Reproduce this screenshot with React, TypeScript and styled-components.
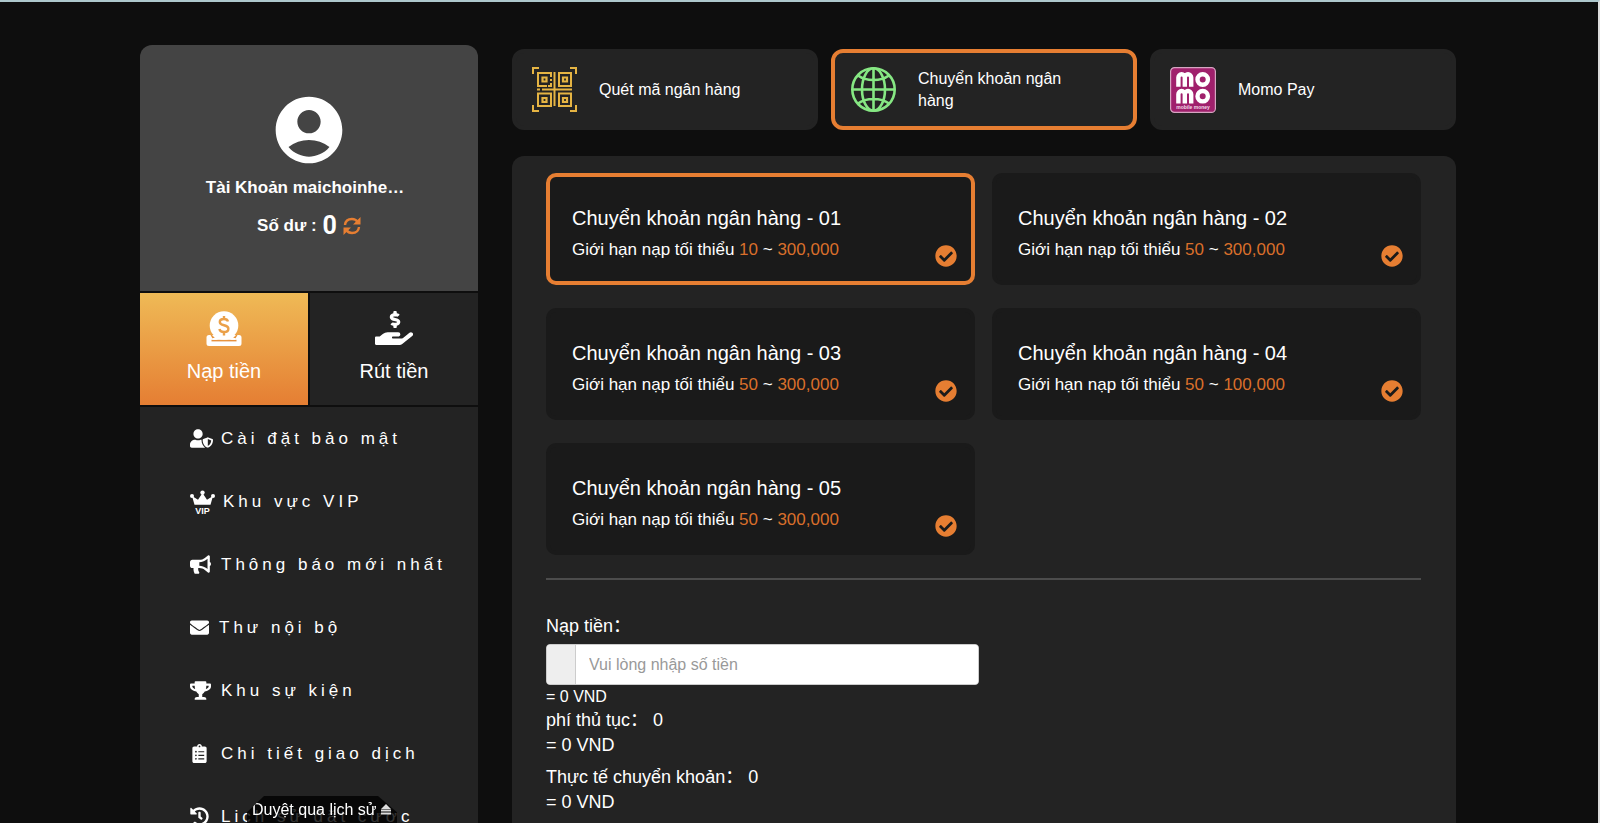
import React, { useState } from "react";
import styled, { createGlobalStyle } from "styled-components";
import {
  FaUserShield,
  FaBullhorn,
  FaEnvelope,
  FaTrophy,
  FaClipboardList,
  FaHistory,
  FaCheckCircle,
  FaHandHoldingUsd,
} from "react-icons/fa";
import { MdAccountCircle } from "react-icons/md";

const GlobalStyle = createGlobalStyle`
  * { box-sizing: border-box; }
  html { background: #0e0e0e; }
  body {
    margin: 0;
    color: #fff;
    font-family: "Liberation Sans", Arial, "Noto Sans CJK SC", sans-serif;
    font-size: 16px;
  }
  button, input { font: inherit; }
`;

const accent = "#e67e32";
const panel = "#232323";

const Page = styled.div`
  height: 100vh;
  overflow: hidden;
  border-top: 2px solid #adc7cc;
  border-right: 2px solid #dcdcdc;
  padding: 43px 142px 0 140px;
  display: flex;
  gap: 34px;
  align-items: flex-start;
`;

const Sidebar = styled.aside`
  flex: none;
  width: 338px;
  display: flex;
  flex-direction: column;
  gap: 2px;
`;

const Profile = styled.section`
  background: #444;
  border-radius: 12px 12px 0 0;
  height: 246px;
  padding-top: 45px;
  display: flex;
  flex-direction: column;
  align-items: center;
  font-weight: bold;
  font-size: 17px;
  line-height: 20px;
  svg { display: block; }
`;

const UserName = styled.p`
  margin: 8px 12px 0 0;
  padding-left: 4px;
`;

const Balance = styled.p`
  margin: 13px 0 0;
  display: flex;
  align-items: center;
  gap: 6px;
  line-height: 30px;
`;

const Amount = styled.span`
  font-family: Roboto, sans-serif;
  font-size: 25px;
`;

const RefreshButton = styled.button`
  border: 0;
  padding: 0;
  background: none;
  color: ${accent};
  cursor: pointer;
`;

const Tabs = styled.div`
  display: grid;
  grid-template-columns: 1fr 1fr;
  gap: 2px;
`;

const Tab = styled.button<{ $active?: boolean }>`
  height: 112px;
  border: 0;
  padding: 16px 0 0;
  color: #fff;
  background: ${(p) => (p.$active ? "linear-gradient(#efba56, #e57e33)" : panel)};
  font-size: 20px;
  line-height: 24px;
  display: flex;
  flex-direction: column;
  align-items: center;
  gap: 12px;
  cursor: pointer;
`;

const Menu = styled.nav`
  background: ${panel};
`;

const MenuLink = styled.a`
  height: 63px;
  padding-left: 50px;
  display: flex;
  align-items: center;
  gap: 8px;
  color: #fff;
  font-size: 17px;
  letter-spacing: 4px;
  text-decoration: none;
  white-space: nowrap;
`;

const MenuIcon = styled.span<{ $width: number }>`
  width: ${(p) => p.$width}px;
  display: flex;
  letter-spacing: 0;
`;

const Main = styled.main`
  flex: 1;
  min-width: 0;
  padding-top: 4px;
`;

const Methods = styled.div`
  display: grid;
  grid-template-columns: repeat(3, 1fr);
  gap: 13px;
`;

const Method = styled.button<{ $active?: boolean }>`
  height: 81px;
  border: 4px solid ${(p) => (p.$active ? accent : panel)};
  border-radius: 12px;
  padding: 0 60px 0 16px;
  background: ${panel};
  color: #fff;
  display: flex;
  align-items: center;
  gap: 22px;
  line-height: 22px;
  text-align: left;
  cursor: pointer;
  svg { flex: none; }
`;

const Panel = styled.section`
  margin-top: 26px;
  padding: 17px 35px 60px 34px;
  border-radius: 12px;
  background: ${panel};
`;

const Channels = styled.div`
  display: grid;
  grid-template-columns: 1fr 1fr;
  gap: 23px 17px;
  padding-bottom: 23px;
  border-bottom: 2px solid #4c4c4c;
`;

const Channel = styled.button<{ $active?: boolean }>`
  height: 112px;
  border: 4px solid ${(p) => (p.$active ? accent : "#1a1a1a")};
  border-radius: 10px;
  padding: 0 14px 0 22px;
  background: #1a1a1a;
  color: #fff;
  display: flex;
  justify-content: space-between;
  align-items: center;
  text-align: left;
  cursor: pointer;
`;

const ChannelText = styled.span`
  padding-top: 9px;
`;

const ChannelTitle = styled.span`
  display: block;
  font-size: 20px;
  line-height: 32px;
`;

const ChannelLimit = styled.span`
  display: block;
  font-size: 17px;
  line-height: 32px;
  em { font-style: normal; color: #d96f2b; }
`;

const Check = styled(FaCheckCircle)`
  color: ${accent};
  align-self: flex-end;
  margin-bottom: 14px;
`;

const Form = styled.form`
  padding-top: 34px;
  font-size: 18px;
  line-height: 25px;
`;

const Label = styled.label`
  display: block;
`;

const Field = styled.div`
  display: flex;
  width: 433px;
  max-width: 100%;
  height: 41px;
  margin-top: 5px;
  border: 1px solid #ccc;
  border-radius: 4px;
  overflow: hidden;
  background: #fff;
`;

const Addon = styled.span`
  width: 29px;
  background: #eee;
  border-right: 1px solid #ccc;
`;

const Input = styled.input`
  flex: 1;
  min-width: 0;
  border: 0;
  padding: 0 13px;
  background: #fff;
  color: #555;
  font-size: 16px;
  outline: 0;
  &::placeholder { color: #999; opacity: 1; }
`;

const Line = styled.p<{ $small?: boolean; $spaced?: boolean }>`
  margin: ${(p) => (p.$spaced ? "7px" : "0")} 0 0;
  font-size: ${(p) => (p.$small ? "16px" : "18px")};
  line-height: ${(p) => (p.$small ? "23px" : "25px")};
`;

const HistoryTab = styled.button`
  position: fixed;
  left: 247px;
  bottom: 0;
  width: 150px;
  height: 27px;
  border: 0;
  padding: 0 0 0 5px;
  display: flex;
  align-items: center;
  gap: 4px;
  background: rgba(0, 0, 0, 0.8);
  clip-path: polygon(17px 0, 131px 0, 100% 60%, 100% 100%, 0 100%, 0 60%);
  color: #fff;
  font-size: 16px;
  white-space: nowrap;
  cursor: pointer;
`;

const RefreshIcon = () => (
  <svg width="18" height="18" viewBox="0 0 18 18" fill="none" stroke="currentColor" strokeWidth="2.4">
    <path d="M2 8C2.4 4 5.5 2 9 2c2.4 0 4.4 1 5.7 3" />
    <path d="M16 10c-.4 4-3.5 6-7 6-2.4 0-4.4-1-5.7-3" />
    <path d="M17.500 0v7.500H10z M.5 18v-7.500H8z" fill="currentColor" stroke="none" />
  </svg>
);

const DepositIcon = () => (
  <svg width="36" height="38" viewBox="0 -2 36 38">
    <path d="M3 24h30a2.500 2.500 0 0 1 2.500 2.500v6A2.500 2.500 0 0 1 33 35H3a2.500 2.500 0 0 1-2.500-2.500v-6A2.500 2.500 0 0 1 3 24z" fill="#fff" />
    <path d="M5.500 29.600h25" stroke="#e7913f" strokeWidth="1.600" />
    <path d="M6 24a15 15 0 0 0 24 0h1.500l-2 3.600h-23L4.500 24z" fill="#e89741" />
    <path d="M6.500 27h23v1.800h-23z" fill="#fff" />
    <circle cx="18" cy="14.500" r="14.300" fill="#fff" />
    <path d="M22 10.500c-.5-1.800-2-2.500-4-2.500-2.400 0-4.200 1-4.200 3 0 4.300 8.600 2.200 8.600 6.700 0 2.200-1.800 3.300-4.400 3.300-2.400 0-4.200-1-4.600-3M18 5v3M18 21v3.500" fill="none" stroke="#eaa049" strokeWidth="2.400" />
  </svg>
);

const VipIcon = () => (
  <svg width="25" height="24" viewBox="0 0 25 24" fill="#fff">
    <circle cx="12.500" cy="2.600" r="2.200" />
    <circle cx="2" cy="6" r="2" />
    <circle cx="23" cy="6" r="2" />
    <path d="M2 6l6 3.800L12.500 3l4.500 6.800L23 6l-2.500 8.800h-16z" />
    <text x="12.500" y="23.500" fontSize="9" fontWeight="bold" textAnchor="middle">VIP</text>
  </svg>
);

const QrIcon = () => (
  <svg width="45" height="45" viewBox="0 0 45 45" fill="none" stroke="#e5b443" strokeWidth="2">
    <path d="M1 7V1h6M38 1h6v6M1 38v6h6M38 44h6v-6" />
    <path d="M22.500 5v34M10 22.500H40M5 22.500h3" />
    <path d="M19 10V6H6v13h9M19 12v2M19 16v3h-3M27 6h12v13H27zM6 26.500h13V39H6zM27 26.500h12V39H27z" />
    <path d="M10.500 10.500h4v4h-4zM31 10.500h4v4h-4zM10.500 31h4v4h-4zM31 31h4v4h-4z" strokeWidth="2.200" />
  </svg>
);

const GlobeIcon = () => (
  <svg width="45" height="45" viewBox="0 0 45 45" fill="none" stroke="#86e783" strokeWidth="2.600">
    <circle cx="22.500" cy="22.500" r="21.200" />
    <ellipse cx="22.500" cy="22.500" rx="11.500" ry="21.200" />
    <path d="M22.500 1v43M1 22.500h43M7 8.500c4 3 9.500 4.500 15.500 4.500S34 11.500 38 8.500M7 36.500c4-3 9.500-4.500 15.500-4.500S34 33.500 38 36.500" />
  </svg>
);

const MomoIcon = () => (
  <svg width="46" height="46" viewBox="0 0 46 46">
    <rect x=".6" y=".6" width="44.800" height="44.800" rx="4" fill="#a0206c" stroke="#d5a4c1" strokeWidth="1.200" />
    <g fill="none" stroke="#fff" strokeWidth="4.400">
      <path d="M8.400 19.700V10.500a3.200 3.200 0 0 1 6.400 0V19.700M14.800 19.700V10.500a3.200 3.200 0 0 1 6.400 0V19.700" />
      <path d="M8.400 36.400V27.200a3.200 3.200 0 0 1 6.400 0V36.400M14.800 36.400V27.200a3.200 3.200 0 0 1 6.400 0V36.400" />
      <circle cx="32.700" cy="12.500" r="5.200" />
      <circle cx="32.700" cy="29.200" r="5.200" />
    </g>
    <text x="23" y="41.500" fill="#f3dcea" fontSize="5" fontWeight="bold" textAnchor="middle">mobile money</text>
  </svg>
);

const EjectIcon = () => (
  <svg width="10" height="11" viewBox="0 0 10 11" fill="#ddd">
    <path d="M5 0l5 5H0zM0 5.500h10v2H0zM0 8.500h10v2H0z" />
  </svg>
);

const menuItems = [
  { label: "Cài đặt bảo mật", width: 23, icon: <FaUserShield size={23} /> },
  { label: "Khu vực VIP", width: 25, icon: <VipIcon /> },
  { label: "Thông báo mới nhất", width: 23, icon: <FaBullhorn size={21} /> },
  { label: "Thư nội bộ", width: 21, icon: <FaEnvelope size={19} /> },
  { label: "Khu sự kiện", width: 23, icon: <FaTrophy size={21} /> },
  { label: "Chi tiết giao dịch", width: 23, icon: <FaClipboardList size={19} /> },
  { label: "Lịch sử đặt cược", width: 23, icon: <FaHistory size={19} /> },
];

const methods = [
  { label: "Quét mã ngân hàng", icon: <QrIcon /> },
  { label: "Chuyển khoản ngân hàng", icon: <GlobeIcon /> },
  { label: "Momo Pay", icon: <MomoIcon /> },
];

const channels = [
  { no: "01", min: "10", max: "300,000" },
  { no: "02", min: "50", max: "300,000" },
  { no: "03", min: "50", max: "300,000" },
  { no: "04", min: "50", max: "100,000" },
  { no: "05", min: "50", max: "300,000" },
];

export default function App() {
  const [method, setMethod] = useState(1);
  const [channel, setChannel] = useState(0);
  const [tab, setTab] = useState(0);

  return (
    <>
      <GlobalStyle />
      <Page>
        <Sidebar>
          <Profile>
            <MdAccountCircle size={80} />
            <UserName>Tài Khoản maichoinhe…</UserName>
            <Balance>
              Số dư : <Amount>0</Amount>
              <RefreshButton type="button" aria-label="Làm mới">
                <RefreshIcon />
              </RefreshButton>
            </Balance>
          </Profile>
          <Tabs>
            <Tab type="button" $active={tab === 0} onClick={() => setTab(0)}>
              <DepositIcon />
              Nạp tiền
            </Tab>
            <Tab type="button" $active={tab === 1} onClick={() => setTab(1)}>
              <FaHandHoldingUsd size={38} />
              Rút tiền
            </Tab>
          </Tabs>
          <Menu>
            {menuItems.map((item) => (
              <MenuLink href="#" key={item.label}>
                <MenuIcon $width={item.width}>{item.icon}</MenuIcon>
                {item.label}
              </MenuLink>
            ))}
          </Menu>
        </Sidebar>
        <Main>
          <Methods>
            {methods.map((m, i) => (
              <Method type="button" key={m.label} $active={i === method} onClick={() => setMethod(i)}>
                {m.icon}
                {m.label}
              </Method>
            ))}
          </Methods>
          <Panel>
            <Channels>
              {channels.map((c, i) => (
                <Channel type="button" key={c.no} $active={i === channel} onClick={() => setChannel(i)}>
                  <ChannelText>
                    <ChannelTitle>Chuyển khoản ngân hàng - {c.no}</ChannelTitle>
                    <ChannelLimit>
                      Giới hạn nạp tối thiểu <em>{c.min}</em> ~ <em>{c.max}</em>
                    </ChannelLimit>
                  </ChannelText>
                  <Check size={22} />
                </Channel>
              ))}
            </Channels>
            <Form>
              <Label htmlFor="amount">Nạp tiền：</Label>
              <Field>
                <Addon />
                <Input id="amount" placeholder="Vui lòng nhập số tiền" />
              </Field>
              <Line $small>= 0 VND</Line>
              <Line>phí thủ tục： 0</Line>
              <Line>= 0 VND</Line>
              <Line $spaced>Thực tế chuyển khoản： 0</Line>
              <Line>= 0 VND</Line>
            </Form>
          </Panel>
        </Main>
      </Page>
      <HistoryTab type="button">
        Duyệt qua lịch sử
        <EjectIcon />
      </HistoryTab>
    </>
  );
}
